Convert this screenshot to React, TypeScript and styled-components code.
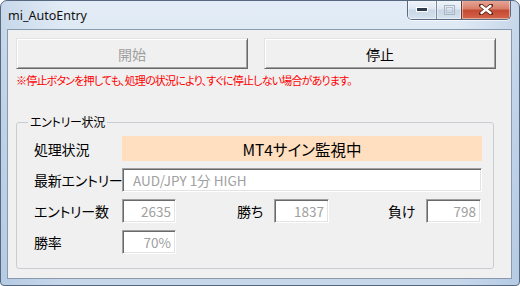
import styled, { createGlobalStyle } from 'styled-components'

const GlobalStyle = createGlobalStyle`
  html, body {
    margin: 0;
    padding: 0;
    background: #ffffff;
  }
  body {
    font-family: "Noto Sans CJK JP", "Noto Sans", sans-serif;
    font-feature-settings: "palt";
  }
`

const Window = styled.div`
  box-sizing: border-box;
  width: 520px;
  height: 286px;
  display: flex;
  flex-direction: column;
  border: 1px solid #56687e;
  border-radius: 7px 7px 4px 4px;
  background:
    linear-gradient(90deg, rgba(150, 180, 215, 0.35), rgba(255, 255, 255, 0) 12%, rgba(255, 255, 255, 0) 88%, rgba(150, 180, 215, 0.35)),
    linear-gradient(180deg, #e3ecf6 0%, #d3e1f0 40%, #c6d7ea 100%);
  overflow: hidden;
`

const TitleBar = styled.div`
  height: 28px;
  flex: none;
  display: flex;
  justify-content: space-between;
  align-items: flex-start;
  padding: 0 8px 0 7px;
`

const Title = styled.div`
  font-family: "Noto Sans", "Liberation Sans", sans-serif;
  font-size: 12.5px;
  line-height: 14px;
  margin-top: 8px;
  color: #111;
`

const Captions = styled.div`
  display: flex;
  margin-top: -1px;
  border: 1px solid #5a6a7f;
  border-top: none;
  border-radius: 0 0 5px 5px;
  overflow: hidden;
  box-shadow: 0 1px 0 rgba(255, 255, 255, 0.7);
`

const CaptionButton = styled.div<{ $w: number; $close?: boolean }>`
  width: ${(p) => p.$w}px;
  height: 19px;
  display: flex;
  align-items: center;
  justify-content: center;
  border-left: ${(p) => (p.$close ? '1px solid #6a3a30' : '1px solid #7b8a9c')};
  background: ${(p) =>
    p.$close
      ? 'linear-gradient(180deg, #e9a99a 0%, #d8806b 45%, #c54a33 55%, #d2654a 100%)'
      : 'linear-gradient(180deg, #f2f6fa 0%, #dfe8f2 45%, #c9d7e6 55%, #d5e2ef 100%)'};
  box-shadow: inset 0 0 0 1px rgba(255, 255, 255, 0.45);

  &:first-child {
    border-left: none;
  }
`

const Client = styled.div`
  box-sizing: border-box;
  height: 250px;
  margin: 0 7px 0 6px;
  border: 1px solid #8a9aae;
  background: #f0f0f0;
  padding: 8px 15px 0 8px;
  display: flex;
  flex-direction: column;
`

const ButtonRow = styled.div`
  display: grid;
  grid-template-columns: 232px 232px;
  column-gap: 16px;
`

const ActionButton = styled.button`
  box-sizing: border-box;
  height: 31px;
  padding: 0;
  font-family: "Noto Sans CJK JP", sans-serif;
  font-size: 14px;
  color: #000;
  background: #f0f0f0;
  border: 1px solid;
  border-color: #e3e3e3 #696969 #696969 #e3e3e3;
  box-shadow: inset 1px 1px 0 #ffffff, inset -1px -1px 0 #a0a0a0;

  &:disabled {
    color: #a0a0a0;
  }
`

const Notice = styled.div`
  margin-top: 3px;
  font-size: 11px;
  letter-spacing: -0.8px;
  line-height: 16px;
  color: #ff0000;
  white-space: nowrap;
`

const Group = styled.fieldset`
  box-sizing: border-box;
  margin: 27px 0 0 0;
  width: 478px;
  height: 154px;
  padding: 7px 0 0 17px;
  border: 1px solid #c9cdd2;
  border-radius: 3px;
  display: flex;
  flex-direction: column;
  min-width: 0;
`

const Legend = styled.legend`
  font-size: 12px;
  line-height: 14px;
  padding: 0 2px;
  margin-left: -6px;
  letter-spacing: -0.3px;
  color: #000;
`

const Rows = styled.div`
  display: flex;
  flex-direction: column;
  gap: 7px;
`

const Row = styled.div<{ $cols: string; $h: number }>`
  display: grid;
  grid-template-columns: ${(p) => p.$cols};
  height: ${(p) => p.$h}px;
  align-items: center;
`

const Label = styled.div`
  font-size: 14px;
  line-height: 18px;
  letter-spacing: -0.2px;
  color: #000;
  white-space: nowrap;
`

const StatusBox = styled.div`
  height: 100%;
  display: flex;
  align-items: center;
  justify-content: center;
  background: #ffdfc0;
  font-size: 15.5px;
  color: #000;
`

const Field = styled.div<{ $align?: 'left' | 'right' }>`
  box-sizing: border-box;
  height: 100%;
  display: flex;
  align-items: center;
  justify-content: ${(p) => (p.$align === 'right' ? 'flex-end' : 'flex-start')};
  padding: ${(p) => (p.$align === 'right' ? '0 4px 0 0' : '0 0 0 10px')};
  background: #ffffff;
  border: 1px solid;
  border-color: #a0a0a0 #ffffff #ffffff #a0a0a0;
  box-shadow: inset 1px 1px 0 #696969, inset -1px -1px 0 #e3e3e3;
  font-family: "Noto Sans CJK JP", "Liberation Sans", sans-serif;
  font-size: 13.5px;
  color: #a0a0a0;
  white-space: nowrap;
`

const MinIcon = () => (
  <svg width="12" height="5" viewBox="0 0 12 5">
    <rect x="0.5" y="0.5" width="11" height="4" fill="#2d3b4f" stroke="#ffffff" />
  </svg>
)

const MaxIcon = () => (
  <svg width="11" height="10" viewBox="0 0 11 10">
    <rect x="0.5" y="0.5" width="10" height="9" fill="none" stroke="#a9b4c2" />
    <rect x="2.5" y="2.5" width="6" height="5" fill="none" stroke="#b9c3cf" />
  </svg>
)

const CloseIcon = () => (
  <svg width="14" height="11" viewBox="0 0 14 11">
    <path d="M2 1.5 L12 9.5 M12 1.5 L2 9.5" stroke="#5a2016" strokeWidth="4" strokeLinecap="round" />
    <path d="M2.5 2 L11.5 9 M11.5 2 L2.5 9" stroke="#ffffff" strokeWidth="2.4" strokeLinecap="round" />
  </svg>
)

const stats = { entries: 2635, wins: 1837, losses: 798 }

export default function App() {
  const rate = Math.round((stats.wins / stats.entries) * 100)
  return (
    <>
      <GlobalStyle />
      <Window>
        <TitleBar>
          <Title>mi_AutoEntry</Title>
          <Captions>
            <CaptionButton $w={28}>
              <MinIcon />
            </CaptionButton>
            <CaptionButton $w={24}>
              <MaxIcon />
            </CaptionButton>
            <CaptionButton $w={48} $close>
              <CloseIcon />
            </CaptionButton>
          </Captions>
        </TitleBar>
        <Client>
          <ButtonRow>
            <ActionButton disabled>開始</ActionButton>
            <ActionButton>停止</ActionButton>
          </ButtonRow>
          <Notice>※停止ボタンを押しても、処理の状況により、すぐに停止しない場合があります。</Notice>
          <Group>
            <Legend>エントリー状況</Legend>
            <Rows>
              <Row $cols="88px 360px" $h={25}>
                <Label>処理状況</Label>
                <StatusBox>MT4サイン監視中</StatusBox>
              </Row>
              <Row $cols="88px 360px" $h={24}>
                <Label>最新エントリー</Label>
                <Field>AUD/JPY 1分 HIGH</Field>
              </Row>
              <Row $cols="88px 54px 61px 37px 55px 59px 38px 55px" $h={24}>
                <Label>エントリー数</Label>
                <Field $align="right">{stats.entries}</Field>
                <span />
                <Label>勝ち</Label>
                <Field $align="right">{stats.wins}</Field>
                <span />
                <Label>負け</Label>
                <Field $align="right">{stats.losses}</Field>
              </Row>
              <Row $cols="88px 54px" $h={24}>
                <Label>勝率</Label>
                <Field $align="right">{rate}%</Field>
              </Row>
            </Rows>
          </Group>
        </Client>
      </Window>
    </>
  )
}
